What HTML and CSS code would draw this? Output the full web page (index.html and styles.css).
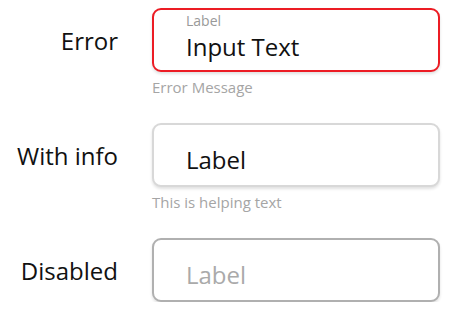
FILE: index.html
```html
<!DOCTYPE html>
<html lang="en">

<head>
  <meta charset="UTF-8">
  <meta name="viewport" content="width=device-width, initial-scale=1.0">
  <title>Text fields</title>
  <link rel="stylesheet" href="styles.css">
</head>

<body>

  <main class="fields">
    <div class="row">
      <div class="row-name">Error</div>
      <div class="field-wrap">
        <div class="field error">
          <span class="field-label">Label</span>
          <span class="field-value">Input Text</span>
        </div>
        <p class="helper">Error Message</p>
      </div>
    </div>

    <div class="row">
      <div class="row-name">With info</div>
      <div class="field-wrap">
        <div class="field plain">
          <span class="field-value">Label</span>
        </div>
        <p class="helper">This is helping text</p>
      </div>
    </div>

    <div class="row">
      <div class="row-name">Disabled</div>
      <div class="field-wrap">
        <div class="field plain disabled">
          <span class="field-value">Label</span>
        </div>
      </div>
    </div>
  </main>

</body>

</html>
```

FILE: styles.css
```css
body {
  font-family: "Open Sans", "Noto Sans", sans-serif;
  background-color: #fff;
  color: #111;
  margin: 0;
  padding: 8px 0 0;
}
.fields {
  display: flex;
  flex-direction: column;
  gap: 26px;
}
.row {
  display: grid;
  grid-template-columns: 118px 288px;
  column-gap: 34px;
  align-items: start;
}
.row-name {
  height: 64px;
  display: flex;
  align-items: center;
  justify-content: flex-end;
  font-size: 24px;
  white-space: nowrap;
}
.field {
  box-sizing: border-box;
  height: 64px;
  border: 2px solid #d8d8d8;
  border-radius: 9px;
  padding: 2px 32px 0;
  display: flex;
  flex-direction: column;
  background-color: #fff;
  box-shadow: 0 2px 3px rgba(0,0,0,0.12);
}
.field.error {
  border-color: #ec1c24;
}
.field.plain {
  padding-top: 20px;
}
.field.disabled {
  border-color: #b0b0b0;
}
.field-label {
  font-size: 14px;
  line-height: 17px;
  color: #999;
}
.field-value {
  font-size: 24px;
  line-height: 30px;
  margin-top: 3px;
}
.field.plain .field-value {
  margin-top: 0;
}
.field.disabled .field-value {
  color: #aaa;
}
.helper {
  margin: 5px 0 0;
  font-size: 15px;
  line-height: 20px;
  color: #a5a5a5;
}
```
